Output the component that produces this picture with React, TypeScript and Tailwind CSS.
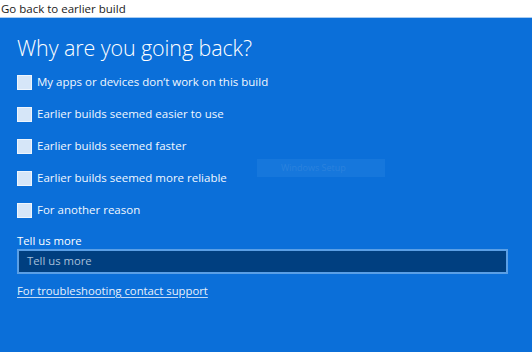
import React from "react";

const reasons = [
  "My apps or devices don’t work on this build",
  "Earlier builds seemed easier to use",
  "Earlier builds seemed faster",
  "Earlier builds seemed more reliable",
  "For another reason",
];

export default function App() {
  return (
    <div
      className="w-[532px] h-[352px] overflow-hidden flex flex-col bg-[#0b6fd9]"
      style={{ fontFamily: '"Open Sans", "Noto Sans", sans-serif' }}
    >
      <div className="h-[18px] shrink-0 bg-white border-b border-[#a9cdf2] flex items-center pl-[1px] text-[11.5px] leading-none text-[#1a1a1a]">
        Go back to earlier build
      </div>
      <div className="relative flex-1 flex flex-col pl-[17px] pr-[24px] bg-[#0b6fd9] text-white">
        <div className="absolute left-[257px] top-[141px] w-[128px] h-[18px] bg-[#1677dc] text-[9px] text-[#2a82de] pl-[24px] flex items-center">
          Windows Setup
        </div>
        <h1 className="mt-[17px] text-[21.5px] leading-[26px] font-light tracking-[-0.1px]">
          Why are you going back?
        </h1>
        <div className="mt-[13px] flex flex-col gap-[16px]">
          {reasons.map((r) => (
            <label key={r} className="flex items-center h-[16px] gap-[5px]">
              <span className="w-[15px] h-[15px] bg-[#d6e6f8] border border-[#eef5fd] shrink-0" />
              <span className="text-[11.5px] leading-none text-[#f1f7fe]">{r}</span>
            </label>
          ))}
        </div>
        <div className="mt-[16px] text-[11.3px] leading-[14px]">Tell us more</div>
        <div className="mt-[1px] w-[491px] h-[25px] bg-[#003f80] border-2 border-[#5a9fe6] flex items-center pl-[8px] text-[11.3px] text-[#a7bfd9]">
          Tell us more
        </div>
        <a className="mt-[9px] text-[11.3px] leading-[16px] text-[#e8f1fc] underline underline-offset-2 decoration-[#c3daf5] w-fit">
          For troubleshooting contact support
        </a>
      </div>
    </div>
  );
}
